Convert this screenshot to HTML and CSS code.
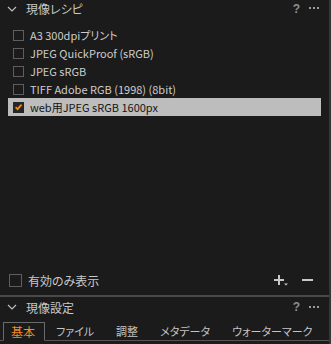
FILE: index.html
```html
<!DOCTYPE html>
<html lang="ja">
<head>
    <meta charset="UTF-8">
    <title>現像レシピ</title>
    <link rel="stylesheet" href="styles.css">
</head>
<body>
    <!-- 現像レシピ -->
    <section class="panel recipes">
        <div class="panel-head">
            <svg class="chevron" width="10" height="6" viewBox="0 0 10 6"><path d="M1 1 L5 5 L9 1" fill="none" stroke="#bdbdbd" stroke-width="1.2"/></svg>
            <span class="panel-title">現像レシピ</span>
            <span class="head-tools">
                <span class="help">?</span>
                <svg width="11" height="3" viewBox="0 0 11 3"><rect x="0" y="0" width="2" height="2" fill="#9a9a9a"/><rect x="4" y="0" width="2" height="2" fill="#9a9a9a"/><rect x="8" y="0" width="2" height="2" fill="#9a9a9a"/></svg>
            </span>
        </div>
        <ul class="recipe-list">
            <li class="recipe"><span class="box"></span>A3 300dpiプリント</li>
            <li class="recipe"><span class="box"></span>JPEG QuickProof (sRGB)</li>
            <li class="recipe"><span class="box"></span>JPEG sRGB</li>
            <li class="recipe"><span class="box"></span>TIFF Adobe RGB (1998) (8bit)</li>
            <li class="recipe selected"><span class="box checked">
                <svg width="10" height="10" viewBox="0 0 10 10"><path d="M1.8 5.2 L4 7.4 L8.4 2.4" fill="none" stroke="#f08a1c" stroke-width="2"/></svg>
            </span>web用JPEG sRGB 1600px</li>
        </ul>
        <div class="recipe-foot">
            <label class="only-active"><span class="box"></span>有効のみ表示</label>
            <span class="foot-tools">
                <svg width="15" height="11" viewBox="0 0 15 11"><path d="M0 5 H10 M5 0 V10" stroke="#c8c8c8" stroke-width="2"/><path d="M10 8.5 H14 L12 10.5Z" fill="#c8c8c8"/></svg>
                <svg width="11" height="2" viewBox="0 0 11 2"><rect width="11" height="2" fill="#c8c8c8"/></svg>
            </span>
        </div>
    </section>

    <!-- 現像設定 -->
    <section class="panel settings">
        <div class="panel-head">
            <svg class="chevron" width="10" height="6" viewBox="0 0 10 6"><path d="M1 1 L5 5 L9 1" fill="none" stroke="#bdbdbd" stroke-width="1.2"/></svg>
            <span class="panel-title">現像設定</span>
            <span class="head-tools">
                <span class="help">?</span>
                <svg width="11" height="3" viewBox="0 0 11 3"><rect x="0" y="0" width="2" height="2" fill="#9a9a9a"/><rect x="4" y="0" width="2" height="2" fill="#9a9a9a"/><rect x="8" y="0" width="2" height="2" fill="#9a9a9a"/></svg>
            </span>
        </div>
        <div class="tabs">
            <span class="tab active">基本</span>
            <span class="tab">ファイル</span>
            <span class="tab">調整</span>
            <span class="tab">メタデータ</span>
            <span class="tab">ウォーターマーク</span>
        </div>
    </section>
</body>
</html>
```

FILE: styles.css
```css
html, body {
    margin: 0;
    height: 100%;
}
body {
    background: #1b1b1b;
    color: #c8c8c8;
    font-family: "Noto Sans CJK JP", "Noto Sans", sans-serif;
    font-feature-settings: "palt";
    font-size: 11px;
    display: flex;
    flex-direction: column;
    border-right: 2px solid #363636;
    box-sizing: border-box;
    overflow: hidden;
}
.panel-head {
    display: flex;
    align-items: center;
    height: 17px;
    padding-left: 7px;
    padding-right: 9px;
    white-space: nowrap;
}
.chevron {
    margin-right: 9px;
    flex: none;
}
.panel-title {
    font-size: 12px;
    color: #c8c8c8;
}
.head-tools {
    margin-left: auto;
    display: flex;
    align-items: center;
    gap: 9px;
    color: #8f8f8f;
}
.help {
    font-weight: bold;
    font-size: 12px;
    font-family: "Liberation Sans", sans-serif;
}
.recipes {
    flex: 1;
    display: flex;
    flex-direction: column;
}
.recipe-list {
    list-style: none;
    margin: 0;
    padding: 9px 8px 0 8px;
    flex: 1;
}
.recipe {
    display: flex;
    align-items: center;
    height: 18px;
    padding-left: 5px;
    white-space: nowrap;
    color: #cdcdcd;
}
.box {
    width: 9px;
    height: 9px;
    border: 1px solid #5e5e5e;
    margin-right: 6px;
    flex: none;
    display: flex;
    align-items: center;
    justify-content: center;
}
.recipe.selected {
    background: #bdbdbd;
    color: #151515;
}
.box.checked {
    background: #262626;
    border-color: #262626;
}
.recipe-foot {
    display: flex;
    align-items: center;
    height: 22px;
    padding: 0 16px 4px 9px;
    border-bottom: 2px solid #4a4a4a;
}
.only-active {
    display: flex;
    align-items: center;
    font-size: 12px;
    white-space: nowrap;
}
.only-active .box {
    width: 11px;
    height: 11px;
    margin-right: 6px;
}
.foot-tools {
    margin-left: auto;
    display: flex;
    align-items: center;
    gap: 13px;
}
.settings .panel-head {
    height: 20px;
}
.tabs {
    display: flex;
    align-items: flex-end;
    padding: 5px 0 0 3px;
    border-bottom: 1px solid #555;
    margin-bottom: 3px;
    white-space: nowrap;
}
.tab {
    flex: none;
    padding: 0 11px;
    height: 17px;
    line-height: 17px;
    font-size: 11px;
    color: #c4c4c4;
}
.tab.active {
    color: #f58a20;
    font-size: 12px;
    border: 1px solid #6a6a6a;
    border-bottom: 1px solid #1b1b1b;
    margin-bottom: -1px;
    padding: 0 9px 0 7px;
}
```
